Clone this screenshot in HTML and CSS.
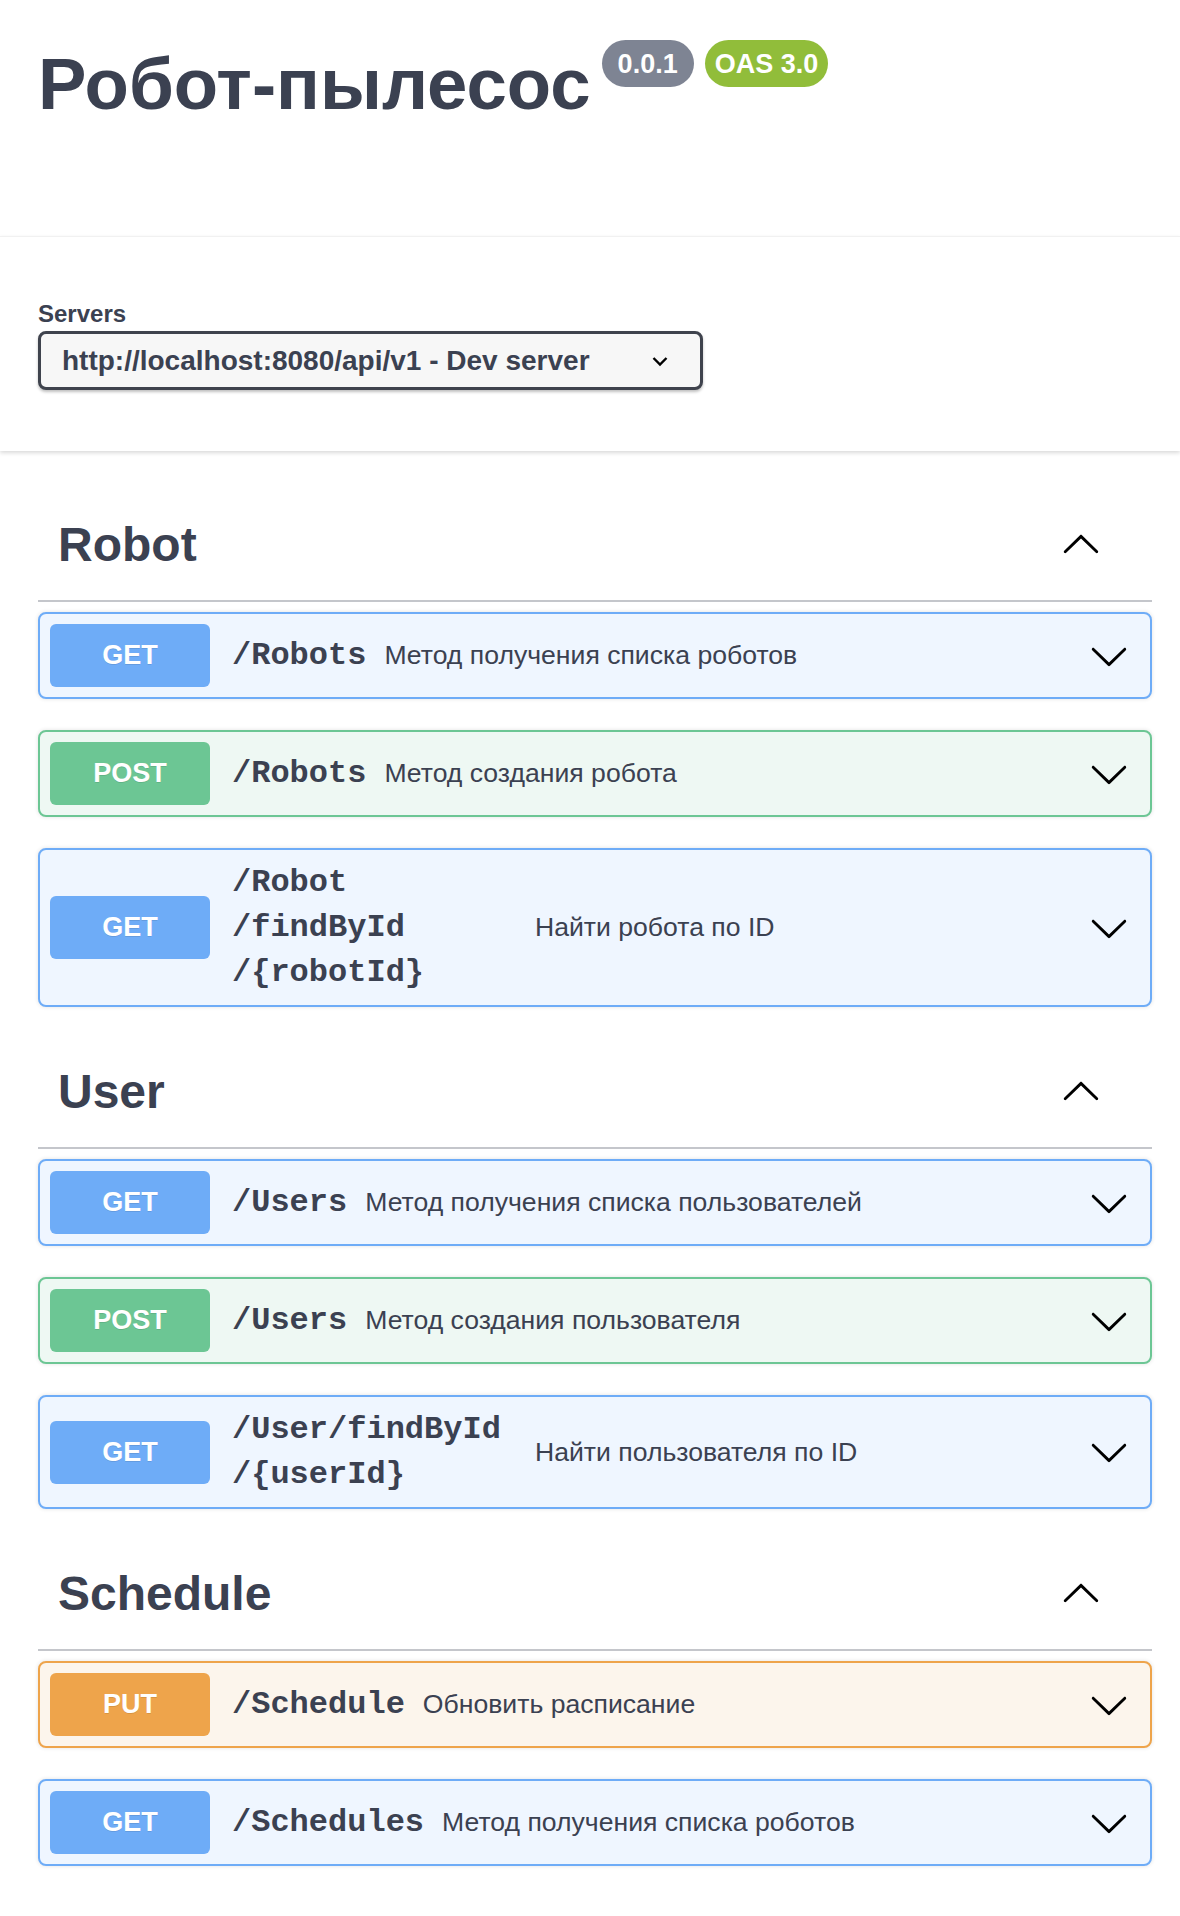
FILE: index.html
```html
<!DOCTYPE html>
<html lang="ru">
<head>
<meta charset="utf-8">
<title>Робот-пылесос</title>
<link rel="stylesheet" href="styles.css">
</head>
<body>
<svg width="0" height="0" class="defs" aria-hidden="true">
  <defs>
    <symbol id="arrow-down" viewBox="0 0 20 20">
      <path d="M17.418 6.109c.272-.268.709-.268.979 0s.271.701 0 .969l-7.908 7.830c-.27.268-.707.268-.979 0l-7.908-7.830c-.27-.268-.27-.701 0-.969.271-.268.709-.268.979 0L10 13.250l7.418-7.141z"/>
    </symbol>
    <symbol id="arrow-up" viewBox="0 0 20 20">
      <path transform="rotate(180 10 10)" d="M17.418 6.109c.272-.268.709-.268.979 0s.271.701 0 .969l-7.908 7.830c-.27.268-.707.268-.979 0l-7.908-7.830c-.27-.268-.27-.701 0-.969.271-.268.709-.268.979 0L10 13.250l7.418-7.141z"/>
    </symbol>
  </defs>
</svg>

<header class="info">
  <h1 class="title">Робот-пылесос<span class="stamps"><span class="stamp version">0.0.1</span><span class="stamp oas">OAS 3.0</span></span></h1>
</header>

<section class="schemes">
  <div class="servers-label">Servers</div>
  <div class="select">
    <span>http://localhost:8080/api/v1 - Dev server</span>
    <svg class="select-arrow" viewBox="0 0 16 11" width="16" height="11"><path d="M1.5 2 L8 8.5 L14.5 2" fill="none" stroke="#000" stroke-width="2.4"/></svg>
  </div>
</section>

<main class="wrapper">
  <section class="tag-section">
    <h3 class="tag"><span class="tag-name">Robot</span><svg class="arrow"><use href="#arrow-up"/></svg></h3>
    <div class="opblock get">
      <span class="method">GET</span>
      <span class="path">/Robots</span>
      <span class="desc">Метод получения списка роботов</span>
      <svg class="arrow"><use href="#arrow-down"/></svg>
    </div>
    <div class="opblock post">
      <span class="method">POST</span>
      <span class="path">/Robots</span>
      <span class="desc">Метод создания робота</span>
      <svg class="arrow"><use href="#arrow-down"/></svg>
    </div>
    <div class="opblock get">
      <span class="method">GET</span>
      <span class="path">/Robot<wbr>/findById<wbr>/{robotId}</span>
      <span class="desc">Найти робота по ID</span>
      <svg class="arrow"><use href="#arrow-down"/></svg>
    </div>
  </section>

  <section class="tag-section">
    <h3 class="tag"><span class="tag-name">User</span><svg class="arrow"><use href="#arrow-up"/></svg></h3>
    <div class="opblock get">
      <span class="method">GET</span>
      <span class="path">/Users</span>
      <span class="desc">Метод получения списка пользователей</span>
      <svg class="arrow"><use href="#arrow-down"/></svg>
    </div>
    <div class="opblock post">
      <span class="method">POST</span>
      <span class="path">/Users</span>
      <span class="desc">Метод создания пользователя</span>
      <svg class="arrow"><use href="#arrow-down"/></svg>
    </div>
    <div class="opblock get">
      <span class="method">GET</span>
      <span class="path">/User<wbr>/findById<wbr>/{userId}</span>
      <span class="desc">Найти пользователя по ID</span>
      <svg class="arrow"><use href="#arrow-down"/></svg>
    </div>
  </section>

  <section class="tag-section">
    <h3 class="tag"><span class="tag-name">Schedule</span><svg class="arrow"><use href="#arrow-up"/></svg></h3>
    <div class="opblock put">
      <span class="method">PUT</span>
      <span class="path">/Schedule</span>
      <span class="desc">Обновить расписание</span>
      <svg class="arrow"><use href="#arrow-down"/></svg>
    </div>
    <div class="opblock get">
      <span class="method">GET</span>
      <span class="path">/Schedules</span>
      <span class="desc">Метод получения списка роботов</span>
      <svg class="arrow"><use href="#arrow-down"/></svg>
    </div>
  </section>
</main>
</body>
</html>
```

FILE: styles.css
```css
html, body {
  margin: 0;
  padding: 0;
  background: #fff;
}

body {
  font-family: "Liberation Sans", Arial, Helvetica, sans-serif;
  color: #3b4151;
}

.defs {
  position: absolute;
  width: 0;
  height: 0;
  overflow: hidden;
}

/* Info / title */
.info {
  box-sizing: border-box;
  height: 236px;
  padding: 42px 0 0 38px;
}

.title {
  display: flex;
  align-items: flex-start;
  margin: 0;
  font-size: 72.6px;
  font-weight: bold;
  line-height: normal;
  color: #3b4151;
}

.stamps {
  display: flex;
  gap: 11px;
  margin-left: 11px;
  margin-top: -2px;
}

.stamp {
  display: inline-block;
  height: 47px;
  line-height: 48px;
  padding: 0 16px;
  border-radius: 24px;
  font-size: 27px;
  font-weight: bold;
  color: #fff;
}

.stamp.version {
  background: #7e8493;
}

.stamp.oas {
  padding: 0 10px;
  background: #91bd3a;
}

/* Servers */
.schemes {
  padding: 63px 0 61px 38px;
  border-top: 1px solid #f1f1f1;
  box-shadow: 0 2px 4px 0 rgba(0, 0, 0, 0.15);
}

.servers-label {
  font-size: 24px;
  font-weight: bold;
  line-height: normal;
}

.select {
  box-sizing: border-box;
  display: flex;
  align-items: center;
  width: 665px;
  height: 59px;
  margin-top: 3px;
  padding-left: 21px;
  border: 3px solid #3f434d;
  border-radius: 8px;
  background: #f7f7f7;
  box-shadow: 0 2px 3px rgba(0, 0, 0, 0.25);
  font-size: 28px;
  font-weight: bold;
  color: #3b4151;
}

.select-arrow {
  margin-left: auto;
  margin-right: 32px;
  margin-top: 2px;
}

/* Operations */
.wrapper {
  padding: 40px 28px 0 38px;
}

.tag {
  display: flex;
  align-items: center;
  margin: 0 0 10px;
  padding: 26px 51px 28px 20px;
  border-bottom: 2px solid #c4c6cb;
  font-size: 48px;
  font-weight: bold;
  line-height: 55px;
  color: #3b4151;
}

.tag-name {
  flex: 1;
}

.arrow {
  width: 40px;
  height: 40px;
  flex-shrink: 0;
  fill: #000;
}

.opblock {
  display: flex;
  align-items: center;
  margin-bottom: 31px;
  padding: 10px 21px 10px 10px;
  border: 2px solid;
  border-radius: 8px;
  box-shadow: 0 0 4px rgba(0, 0, 0, 0.12);
}

.method {
  display: flex;
  align-items: center;
  justify-content: center;
  flex-shrink: 0;
  width: 160px;
  height: 63px;
  border-radius: 6px;
  font-size: 27px;
  font-weight: bold;
  color: #fff;
  text-shadow: 0 1px 0 rgba(0, 0, 0, 0.1);
}

.path {
  flex-shrink: 0;
  max-width: 285px;
  margin-left: 22px;
  font-family: "Liberation Mono", "Courier New", monospace;
  font-size: 32px;
  font-weight: bold;
  line-height: 45px;
  color: #3b4151;
}

.desc {
  flex: 1;
  margin-left: 18px;
  font-size: 26.6px;
  color: #3b4151;
}

.opblock.get {
  border-color: #6eacf7;
  background: #eff6ff;
}

.opblock.get .method {
  background: #6eacf7;
}

.opblock.post {
  border-color: #6cc694;
  background: #eef8f3;
}

.opblock.post .method {
  background: #6cc694;
}

.opblock.put {
  border-color: #eea44b;
  background: #fcf5ec;
}

.opblock.put .method {
  background: #eea44b;
}
```
